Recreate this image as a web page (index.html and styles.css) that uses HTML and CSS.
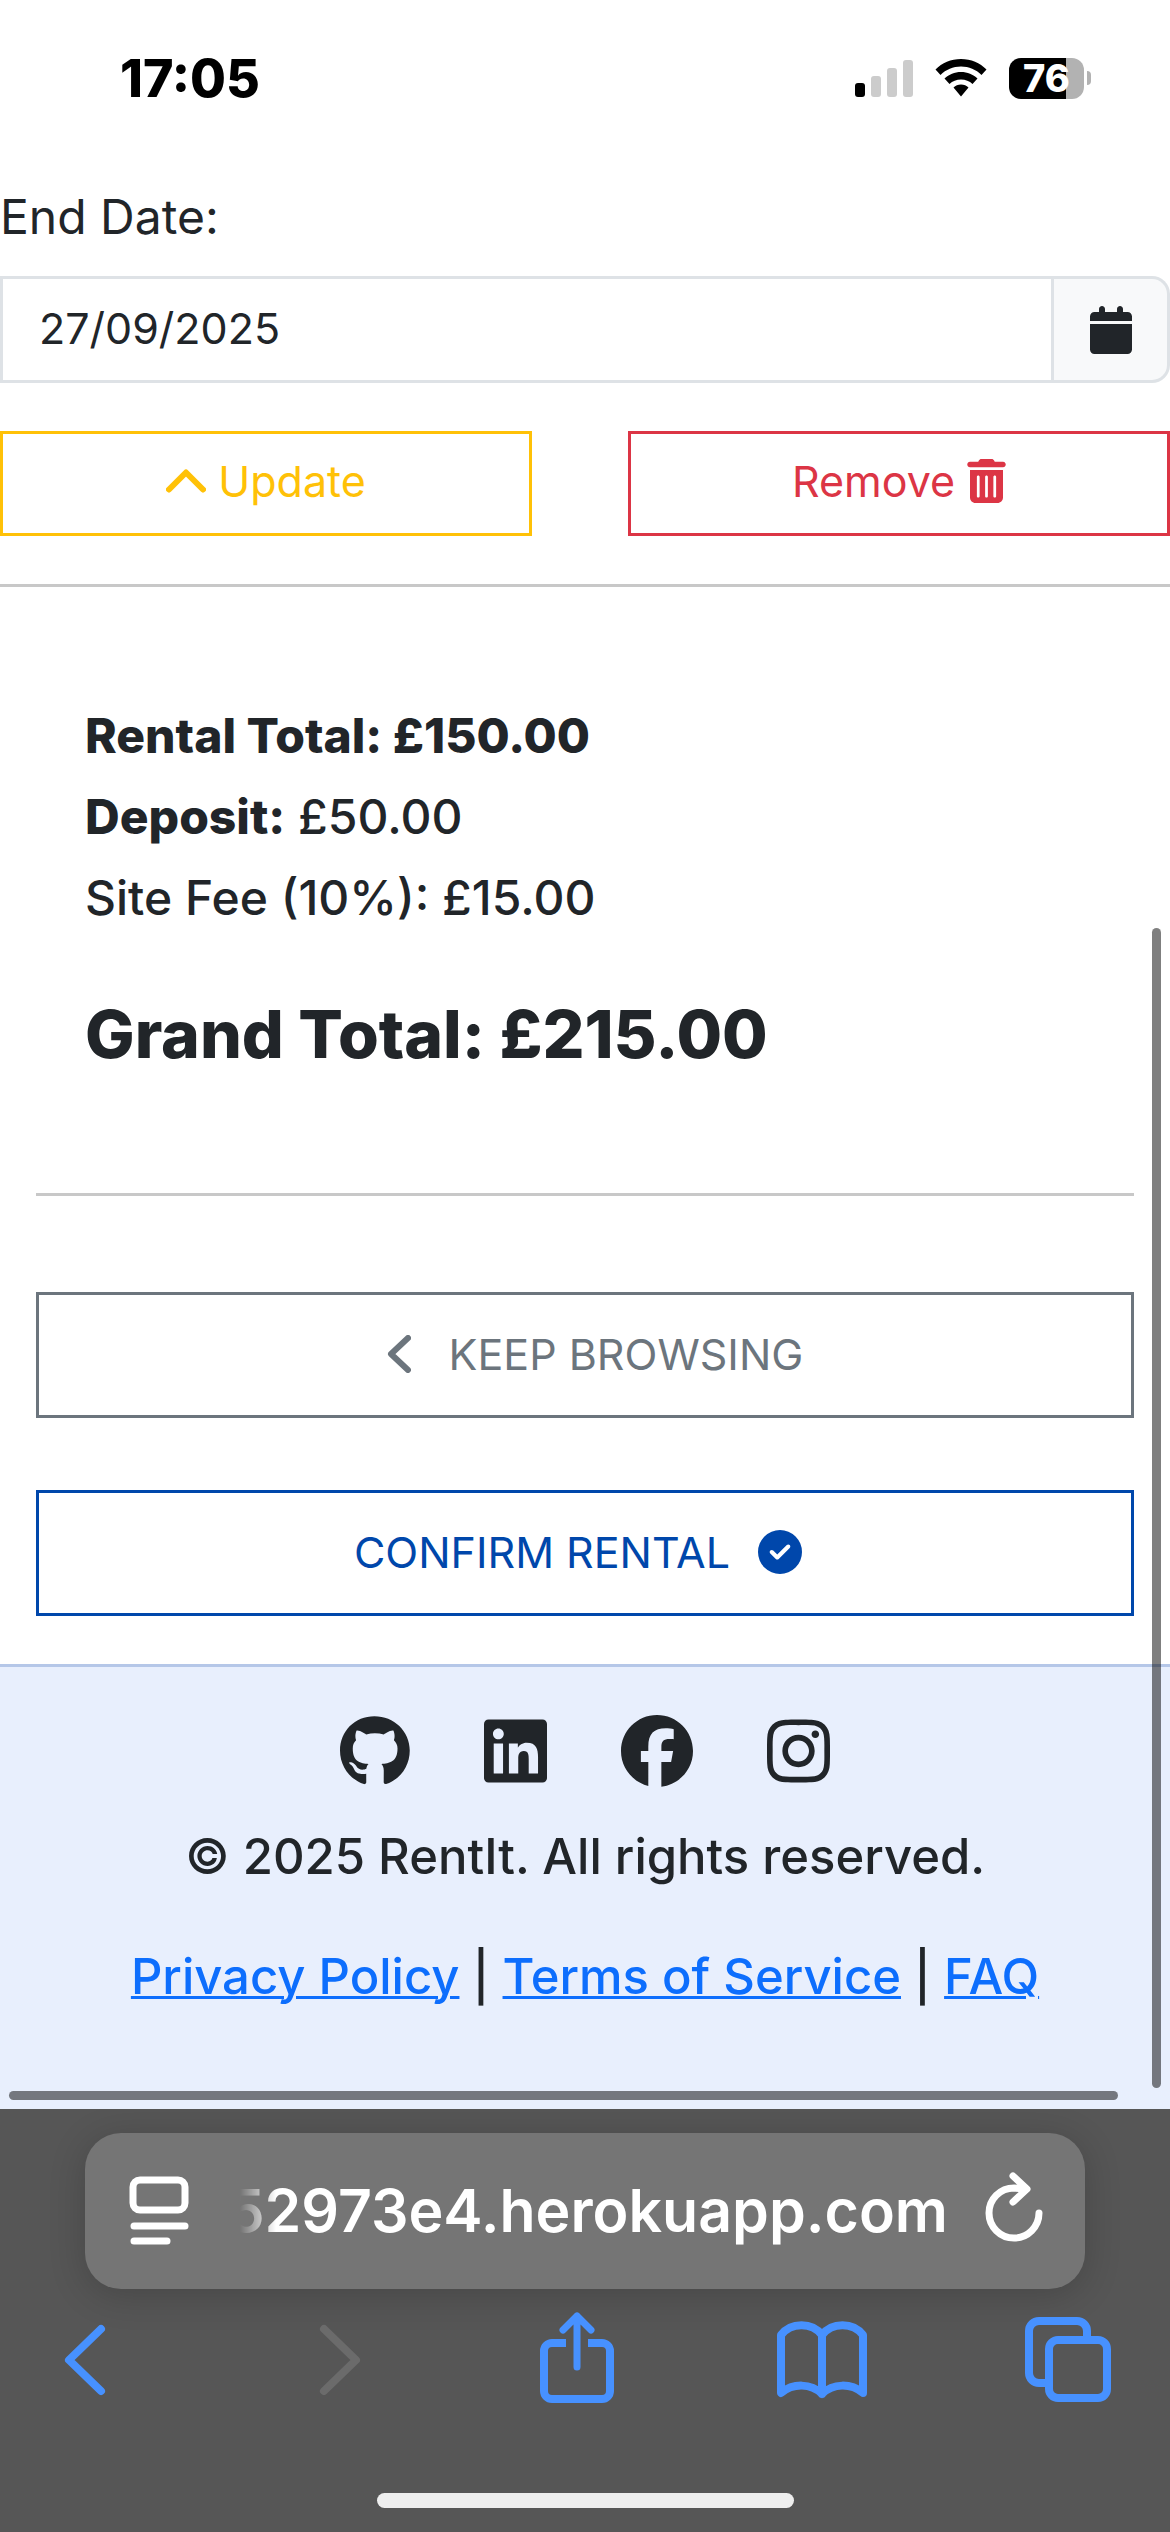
FILE: index.html
```html
<!DOCTYPE html>
<html lang="en-GB">
<head>
<meta charset="utf-8">
<meta name="viewport" content="width=device-width, initial-scale=1">
<title>RentIt</title>
<link rel="stylesheet" href="styles.css">
</head>
<body>
<div class="page">
  <header class="status">
    <time class="status-time">17:05</time>
    <div class="status-icons">
      <svg class="signal" viewBox="0 0 58 37" aria-hidden="true"><rect x="0" y="23" width="10" height="14" rx="3"/><g fill="#ccc"><rect x="16" y="16" width="10" height="21" rx="3"/><rect x="32" y="8" width="10" height="29" rx="3"/><rect x="48" y="0" width="10" height="37" rx="3"/></g></svg>
      <svg class="wifi" viewBox="0 0 52 38" aria-hidden="true"><path d="M26 0C36 0 45 4 51.500 10.500L46.500 16C41 10.500 34 7.500 26 7.500S11 10.500 5.500 16L.5 10.500C7 4 16 0 26 0zM26 13c6.500 0 12 2.500 16.500 6.500L37.500 25C34.500 22 30.500 20.500 26 20.500S17.500 22 14.500 25L9.500 19.500C14 15.500 19.500 13 26 13zM26 25.500c3 0 5.500 1 7.500 3L26 37.500 18.500 28.500c2-2 4.500-3 7.500-3z"/></svg>
      <div class="battery-wrap"><span class="battery">76</span><span class="battery-nub"></span></div>
    </div>
  </header>

  <main>
    <form class="item">
      <label class="date-label" for="end-date">End Date:</label>
      <div class="input-group">
        <input class="date-input" id="end-date" type="text" value="27/09/2025">
        <button class="date-button" type="button" aria-label="Open calendar">
          <svg class="icon-calendar" viewBox="0 0 448 512"><path d="M96 32V64H48C21.500 64 0 85.500 0 112v48H448V112c0-26.500-21.500-48-48-48H352V32c0-17.700-14.300-32-32-32s-32 14.300-32 32V64H160V32c0-17.700-14.300-32-32-32S96 14.300 96 32zM448 192H0V464c0 26.500 21.500 48 48 48H400c26.500 0 48-21.500 48-48V192z"/></svg>
        </button>
      </div>
      <div class="item-actions">
        <button class="btn btn-update" type="submit"><svg class="icon-up" viewBox="0 0 40 24"><path d="M3 20.500 20 3.500l17 17"/></svg>Update</button>
        <button class="btn btn-remove" type="button">Remove<svg class="icon-trash" viewBox="0 0 448 512"><path d="M135.200 17.700C140.600 6.800 151.700 0 163.800 0H284.200c12.100 0 23.200 6.800 28.600 17.700L320 32h96c17.700 0 32 14.300 32 32s-14.300 32-32 32H32C14.300 96 0 81.700 0 64S14.300 32 32 32h96l7.200-14.300zM32 128H416V448c0 35.300-28.700 64-64 64H96c-35.300 0-64-28.700-64-64V128zm96 64c-8.800 0-16 7.200-16 16V432c0 8.800 7.200 16 16 16s16-7.200 16-16V208c0-8.800-7.200-16-16-16zm96 0c-8.800 0-16 7.200-16 16V432c0 8.800 7.200 16 16 16s16-7.200 16-16V208c0-8.800-7.200-16-16-16zm96 0c-8.800 0-16 7.200-16 16V432c0 8.800 7.200 16 16 16s16-7.200 16-16V208c0-8.800-7.200-16-16-16z"/></svg></button>
      </div>
    </form>

    <section class="totals">
      <p class="total-line"><strong>Rental Total: £150.00</strong></p>
      <p class="total-line"><strong>Deposit:</strong> £50.00</p>
      <p class="total-line">Site Fee (10%): £15.00</p>
      <h2 class="grand-total">Grand Total: £215.00</h2>
    </section>

    <div class="checkout">
      <button class="btn btn-large btn-browse" type="button"><svg class="icon-left" viewBox="0 0 24 38"><path d="M21 3 4 19l17 16"/></svg>KEEP BROWSING</button>
      <button class="btn btn-large btn-confirm" type="button">CONFIRM RENTAL<svg class="icon-check" viewBox="0 0 512 512"><path d="M256 512A256 256 0 1 0 256 0a256 256 0 1 0 0 512zM369 209L241 337c-9.400 9.400-24.600 9.400-33.900 0l-64-64c-9.400-9.400-9.400-24.600 0-33.900s24.600-9.400 33.900 0l47 47L335 175c9.400-9.400 24.600-9.400 33.900 0s9.400 24.600 0 33.900z"/></svg></button>
    </div>
  </main>

  <footer class="footer">
    <nav class="social">
      <a href="#" aria-label="GitHub"><svg viewBox="0 0 496 512"><path d="M244.800 8C106.100 8 0 113.300 0 252c0 110.900 69.800 205.800 169.500 239.200 12.800 2.300 17.300-5.600 17.300-12.100 0-6.200-.3-40.400-.3-61.400 0 0-70 15-84.700-29.800 0 0-11.400-29.100-27.800-36.600 0 0-22.900-15.700 1.600-15.400 0 0 24.900 2 38.600 25.800 21.900 38.600 58.600 27.500 72.900 20.900 2.300-16 8.800-27.100 16-33.700-55.900-6.200-112.300-14.300-112.300-110.500 0-27.500 7.600-41.300 23.600-58.900-2.600-6.500-11.100-33.300 2.600-67.900 20.900-6.500 69 27 69 27 20-5.600 41.500-8.500 62.800-8.500s42.800 2.900 62.800 8.500c0 0 48.100-33.600 69-27 13.700 34.700 5.200 61.400 2.600 67.900 16 17.700 25.800 31.500 25.800 58.900 0 96.500-58.900 104.200-114.800 110.500 9.200 7.900 17 22.900 17 46.400 0 33.700-.3 75.400-.3 83.600 0 6.500 4.600 14.400 17.300 12.100C428.200 457.800 496 362.900 496 252 496 113.300 383.500 8 244.800 8z"/></svg></a>
      <a href="#" aria-label="LinkedIn"><svg viewBox="0 0 448 512"><path d="M416 32H31.900C14.300 32 0 46.500 0 64.300v383.400C0 465.500 14.300 480 31.900 480H416c17.600 0 32-14.500 32-32.300V64.300c0-17.800-14.400-32.300-32-32.300zM135.400 416H69V202.200h66.500V416zm-33.200-243c-21.300 0-38.500-17.300-38.500-38.500S80.900 96 102.200 96c21.200 0 38.500 17.300 38.500 38.500 0 21.300-17.200 38.500-38.500 38.500zm282.100 243h-66.400V312c0-24.800-.5-56.700-34.500-56.700-34.600 0-39.900 27-39.900 54.900V416h-66.400V202.200h63.700v29.200h.9c8.900-16.800 30.600-34.500 62.900-34.500 67.200 0 79.700 44.300 79.700 101.900V416z"/></svg></a>
      <a href="#" aria-label="Facebook"><svg viewBox="0 0 512 512"><path d="M512 256C512 114.600 397.400 0 256 0S0 114.600 0 256C0 376 82.700 476.800 194.200 504.500V334.200H141.400V256h52.800V222.300c0-87.100 39.400-127.500 125-127.500c16.200 0 44.200 3.200 55.700 6.400V172c-6-.6-16.500-1-29.600-1c-42 0-58.200 15.900-58.200 57.200V256h83.600l-14.400 78.200H287V510.100C413.800 494.800 512 386.900 512 256h0z"/></svg></a>
      <a href="#" aria-label="Instagram"><svg viewBox="0 0 448 512"><path d="M224.100 141c-63.600 0-114.900 51.300-114.900 114.900s51.300 114.900 114.900 114.900S339 319.500 339 255.900 287.700 141 224.100 141zm0 189.600c-41.100 0-74.700-33.500-74.700-74.700s33.500-74.700 74.700-74.700 74.700 33.500 74.700 74.700-33.600 74.700-74.700 74.700zm146.400-194.300c0 14.900-12 26.800-26.800 26.800-14.900 0-26.800-12-26.800-26.800s12-26.800 26.800-26.800 26.800 12 26.800 26.800zm76.100 27.200c-1.700-35.900-9.900-67.700-36.200-93.900-26.200-26.200-58-34.400-93.900-36.200-37-2.100-147.900-2.100-184.900 0-35.800 1.700-67.600 9.900-93.900 36.100s-34.400 58-36.200 93.900c-2.100 37-2.100 147.900 0 184.900 1.700 35.900 9.900 67.700 36.200 93.900s58 34.400 93.900 36.200c37 2.100 147.900 2.100 184.900 0 35.900-1.700 67.700-9.900 93.900-36.200 26.200-26.200 34.400-58 36.200-93.900 2.100-37 2.100-147.800 0-184.800zM398.800 388c-7.800 19.600-22.900 34.700-42.600 42.600-29.500 11.700-99.500 9-132.100 9s-102.700 2.600-132.100-9c-19.600-7.800-34.700-22.900-42.600-42.600-11.700-29.500-9-99.500-9-132.100s-2.600-102.700 9-132.100c7.800-19.600 22.900-34.700 42.600-42.600 29.500-11.700 99.500-9 132.100-9s102.700-2.600 132.100 9c19.600 7.800 34.700 22.900 42.600 42.600 11.700 29.500 9 99.500 9 132.100s2.700 102.700-9 132.100z"/></svg></a>
    </nav>
    <p class="copyright">© 2025 RentIt. All rights reserved.</p>
    <p class="legal"><a href="#">Privacy Policy</a> | <a href="#">Terms of Service</a> | <a href="#">FAQ</a></p>
  </footer>
  <div class="scroll-y"></div>
  <div class="scroll-x"></div>
</div>

<div class="browser">
  <div class="address">
    <button class="tool" type="button" aria-label="Page menu"><svg class="icon-reader" viewBox="0 0 58 68"><rect x="3" y="3" width="52" height="30" rx="7"/><path d="M4 49h51M4 64h33"/></svg></button>
    <span class="url">52973e4.herokuapp.com</span>
    <button class="tool" type="button" aria-label="Reload"><svg class="icon-reload" viewBox="0 0 56 68"><path d="M53 36A25 25 0 1 1 28 11L39 12M27 -1L41 12 27 25"/></svg></button>
  </div>
  <nav class="toolbar">
    <button class="tool" type="button" aria-label="Back"><svg class="icon-back" viewBox="0 0 42 92"><path d="M37 17 5 48l32 31"/></svg></button>
    <button class="tool tool-off" type="button" aria-label="Forward" disabled><svg class="icon-forward" viewBox="-18 0 60 92"><path d="M5 17l32 31L5 79"/></svg></button>
    <button class="tool" type="button" aria-label="Share"><svg class="icon-share" viewBox="0 0 74 92"><path stroke-linecap="butt" d="M26 31H12a8 8 0 0 0-8 8v40a8 8 0 0 0 8 8h50a8 8 0 0 0 8-8V39a8 8 0 0 0-8-8H48"/><path class="thin" d="M37 55V4M23 18 37 4l14 14"/></svg></button>
    <button class="tool" type="button" aria-label="Bookmarks"><svg class="icon-book" viewBox="0 0 90 92"><path d="M4 81V23C14 10 35 10 45 23C55 10 76 10 86 23V81C74 71 56 71 45 82C34 71 16 71 4 81zM45 23v59"/></svg></button>
    <button class="tool" type="button" aria-label="Tabs"><svg class="icon-tabs" viewBox="0 0 86 92"><path stroke-linecap="butt" d="M62 27V19a10 10 0 0 0-10-10H14A10 10 0 0 0 4 19v42a10 10 0 0 0 10 10h7"/><rect x="24" y="28" width="58" height="58" rx="9"/></svg></button>
  </nav>
  <div class="home-bar"></div>
</div>
</body>
</html>
```

FILE: styles.css
```css
* { box-sizing: border-box; }

body {
  margin: 0;
  min-height: 100vh;
  display: flex;
  flex-direction: column;
  background: #fff;
  color: #212529;
  font-family: Inter, "Liberation Sans", sans-serif;
  font-size: 43px;
}

button, input { font: inherit; color: inherit; }
button { margin: 0; padding: 0; background: none; border: 0; }
svg { display: block; fill: currentColor; flex: none; }
p, h2 { margin: 0; }

.page { position: relative; }

/* Status bar */
.status {
  display: flex;
  justify-content: space-between;
  align-items: center;
  height: 156px;
  padding: 0 79px 0 120px;
  color: #000;
}
.status-time { font-size: 52px; font-weight: 800; }
.status-icons { display: flex; align-items: center; gap: 22px; }
.signal { width: 58px; height: 37px; }
.wifi { width: 52px; height: 38px; }
.battery-wrap { display: flex; align-items: center; gap: 3px; }
.battery {
  width: 75px;
  height: 41px;
  border-radius: 12px;
  background: linear-gradient(90deg, #000 76%, #b2b2b2 76%);
  color: #fff;
  font-size: 38px;
  font-weight: 800;
  line-height: 41px;
  text-align: center;
}
.battery-nub { width: 4px; height: 14px; border-radius: 0 4px 4px 0; background: #b2b2b2; }

/* Rental item */
.item { padding: 25px 0 48px; border-bottom: 3px solid #c8c8c8; }
.date-label { display: block; font-size: 48px; line-height: 72px; margin-bottom: 23px; }
.input-group { display: flex; margin-bottom: 48px; }
.date-input {
  flex: 1;
  min-width: 0;
  height: 107px;
  padding: 0 36px 4px;
  border: 3px solid #dee2e6;
  background: #fff;
}
.date-button {
  display: flex;
  justify-content: center;
  align-items: center;
  width: 116px;
  border: 3px solid #dee2e6;
  border-left: 0;
  border-radius: 0 18px 18px 0;
  background: #f8f9fa;
}
.icon-calendar { width: 44px; height: 48px; }
.item-actions { display: grid; grid-template-columns: 532fr 542fr; gap: 96px; }
.btn {
  display: flex;
  justify-content: center;
  align-items: center;
  gap: 12px;
  height: 105px;
  padding-bottom: 5px;
  border: 3px solid currentColor;
}
.btn-update { color: #ffc107; }
.btn-remove { color: #dc3545; }
.icon-up, .icon-left { fill: none; stroke: currentColor; stroke-width: 6; stroke-linecap: round; stroke-linejoin: round; }
.icon-up { width: 40px; height: 24px; }
.icon-trash { width: 39px; height: 44px; }

/* Totals */
.totals {
  margin: 0 36px;
  padding: 108px 49px 111px;
  border-bottom: 3px solid #c8c8c8;
  font-size: 48px;
  font-weight: 500;
}
.total-line { line-height: 81px; }
.total-line strong { font-weight: 800; }
.grand-total { margin-top: 48px; font-size: 66px; font-weight: 800; line-height: 96px; }

/* Checkout buttons */
.checkout { display: flex; flex-direction: column; gap: 72px; padding: 96px 36px 48px; }
.btn-large { height: 126px; padding-bottom: 2px; }
.btn-browse { gap: 38px; padding-left: 20px; color: #6c757d; }
.btn-confirm { gap: 28px; padding-right: 14px; color: #0047ab; }
.icon-left { width: 24px; height: 38px; }
.icon-check { width: 44px; height: 44px; }

/* Footer */
.footer {
  padding: 48px 24px 96px;
  border-top: 3px solid #b5c7e8;
  background: #e8effd;
  font-size: 49px;
  font-weight: 500;
  line-height: 72px;
  text-align: center;
}
.social { display: flex; justify-content: center; gap: 74px; margin-bottom: 34px; }
.social a { color: #212529; }
.social svg { height: 72px; }
.copyright { margin-bottom: 48px; }
.legal a { color: #0d6efd; text-decoration-thickness: 3px; }

/* Overlay scroll indicators */
.scroll-y, .scroll-x { position: absolute; border-radius: 5px; background: rgba(0, 0, 0, 0.5); }
.scroll-y { top: 44%; right: 9px; bottom: 21px; width: 9px; }
.scroll-x { left: 9px; right: 52px; bottom: 9px; height: 9px; }

/* Browser chrome */
.browser { flex: 1; padding: 24px 42px; background: #565656; }
.address {
  display: flex;
  align-items: center;
  gap: 38px;
  height: 156px;
  margin: 0 43px;
  padding: 0 43px 0 45px;
  border-radius: 36px;
  background: #757575;
  box-shadow: 0 6px 36px rgba(0, 0, 0, 0.18);
  color: #fff;
}
.url {
  display: flex;
  justify-content: flex-end;
  flex: 1;
  min-width: 0;
  margin-left: 14px;
  overflow: hidden;
  font-size: 59px;
  font-weight: 600;
  line-height: 84px;
  white-space: nowrap;
  mask-image: linear-gradient(90deg, transparent, #000 36px);
}
.tool { color: #4791ff; }
.tool svg { fill: none; stroke: currentColor; stroke-width: 8; stroke-linecap: round; stroke-linejoin: round; }
.tool .thin { stroke-width: 7; }
.address .tool { color: #fff; }
.address .tool svg { stroke-width: 7; overflow: visible; }
.tool-off { color: #6b6b6b; }
.icon-reader { width: 58px; height: 68px; }
.icon-reload { width: 56px; height: 68px; }
.toolbar { display: flex; justify-content: space-between; padding: 23px 17px 0 0; }
.toolbar .tool { display: flex; justify-content: center; width: 86px; }
.toolbar svg { height: 92px; }
.icon-back { width: 42px; }
.icon-forward { width: 60px; }
.icon-share { width: 74px; }
.icon-book { width: 90px; }
.icon-tabs { width: 86px; }
.home-bar { width: 417px; height: 15px; margin: 89px auto 0; border-radius: 8px; background: #eee; }
```
